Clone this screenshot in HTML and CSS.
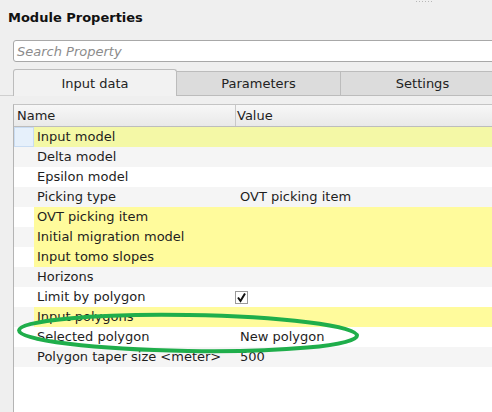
FILE: index.html
```html
<!DOCTYPE html>
<html>
<head>
<meta charset="utf-8">
<link rel="stylesheet" href="styles.css">
</head>
<body>
<div class="window">
  <div class="grip"><i></i><i></i><i></i><i></i><i></i><i></i></div>
  <div class="title">Module Properties</div>
  <div class="search"><span class="placeholder">Search Property</span></div>
  <div class="tabs">
    <div class="tab active">Input data</div>
    <div class="tab">Parameters</div>
    <div class="tab">Settings</div>
  </div>
  <div class="pane">
    <div class="table">
      <div class="head">
        <div class="hcell name">Name</div>
        <div class="hcell value">Value</div>
      </div>
      <div class="row req current"><div class="gutter"></div><div class="c n">Input model</div><div class="c v"></div></div>
      <div class="row alt"><div class="gutter"></div><div class="c n">Delta model</div><div class="c v"></div></div>
      <div class="row"><div class="gutter"></div><div class="c n">Epsilon model</div><div class="c v"></div></div>
      <div class="row alt"><div class="gutter"></div><div class="c n">Picking type</div><div class="c v">OVT picking item</div></div>
      <div class="row req"><div class="gutter"></div><div class="c n">OVT picking item</div><div class="c v"></div></div>
      <div class="row req alt"><div class="gutter"></div><div class="c n">Initial migration model</div><div class="c v"></div></div>
      <div class="row req"><div class="gutter"></div><div class="c n">Input tomo slopes</div><div class="c v"></div></div>
      <div class="row alt"><div class="gutter"></div><div class="c n">Horizons</div><div class="c v"></div></div>
      <div class="row"><div class="gutter"></div><div class="c n">Limit by polygon</div><div class="c v"><span class="check"><svg width="11" height="11" viewBox="0 0 11 11"><path d="M2 5.5 L4.5 9 L9 1.5" fill="none" stroke="#111" stroke-width="2"/></svg></span></div></div>
      <div class="row req alt"><div class="gutter"></div><div class="c n">Input polygons</div><div class="c v"></div></div>
      <div class="row"><div class="gutter"></div><div class="c n">Selected polygon</div><div class="c v">New polygon</div></div>
      <div class="row alt"><div class="gutter"></div><div class="c n">Polygon taper size &lt;meter&gt;</div><div class="c v">500</div></div>
    </div>
  </div>
  <svg class="mark" width="492" height="412" viewBox="0 0 492 412">
    <ellipse cx="188" cy="333" rx="169" ry="18" transform="rotate(0.9 188 333)" fill="none" stroke="#1fae4b" stroke-width="4"/>
  </svg>
</div>
</body>
</html>
```
FILE: styles.css
```css
html, body {
  margin: 0;
  padding: 0;
  background: #efefef;
  overflow: hidden;
}
.window {
  width: 492px;
  height: 412px;
  overflow: hidden;
  font-family: "DejaVu Sans", "Liberation Sans", sans-serif;
  font-size: 13px;
  color: #1e1e1e;
  position: relative;
}
.grip {
  position: absolute;
  left: 416px;
  top: 1px;
  display: flex;
  gap: 2px;
}
.grip i {
  display: block;
  width: 1px;
  height: 1px;
  background: #b8b8b8;
}
.title {
  font-weight: bold;
  padding: 10px 0 0 8px;
  line-height: 16px;
  height: 30px;
  color: #111;
}
.search {
  margin-left: 13px;
  width: 500px;
  height: 20px;
  border: 1px solid #a8a8a8;
  border-radius: 3px;
  background: #fff;
  display: flex;
  align-items: center;
  padding-left: 3px;
}
.placeholder {
  font-style: italic;
  color: #8c8c8c;
}
.tabs {
  display: flex;
  margin-top: 7px;
  margin-left: 13px;
  height: 27px;
  align-items: flex-end;
}
.tab {
  width: 164px;
  flex: none;
  box-sizing: border-box;
  height: 25px;
  border: 1px solid #bcbcbc;
  background: #dcdcdc;
  display: flex;
  align-items: center;
  justify-content: center;
  color: #222;
}
.tab + .tab {
  border-left: none;
}
.tab.active {
  height: 27px;
  background: #f2f2f2;
  border-bottom: none;
  border-radius: 3px 3px 0 0;
}
.pane {
  padding: 8px 0 0 13px;
  border-top: 1px solid #cfcfcf;
  margin-top: -1px;
}
.table {
  border-left: 1px solid #b4b4b4;
  border-top: 1px solid #c4c4c4;
  background: #fff;
  height: 320px;
  width: 490px;
}
.head {
  display: flex;
  height: 21px;
  border-bottom: 1px solid #bdbdbd;
  background: linear-gradient(#f7f7f7, #e9e9e9);
}
.hcell {
  line-height: 21px;
  padding-left: 3px;
  box-sizing: border-box;
}
.hcell.name {
  width: 222px;
  border-right: 1px solid #c8c8c8;
}
.hcell.value {
  flex: 1;
  padding-left: 1px;
}
.row {
  display: flex;
  height: 20px;
  line-height: 20px;
  background: #fff;
}
.row.alt {
  background: #f5f5f5;
}
.gutter {
  width: 20px;
  flex: none;
}
.c.n {
  width: 202px;
  padding-left: 3px;
  box-sizing: border-box;
  flex: none;
}
.c.v {
  flex: 1;
  padding-left: 4px;
  display: flex;
  align-items: center;
}
.row.req .c {
  background: #fffb9c;
}
.row.current .gutter {
  background: #e6f0fb;
  box-shadow: inset 0 0 0 1px #c9dcf2;
}
.row.current .c {
  background: #f4f8a6;
}
.check {
  width: 11px;
  height: 11px;
  border: 1px solid #9a9a9a;
  background: #fff;
  display: flex;
  margin-left: -5px;
}
.mark {
  position: absolute;
  left: 0;
  top: 0;
  pointer-events: none;
}
```
